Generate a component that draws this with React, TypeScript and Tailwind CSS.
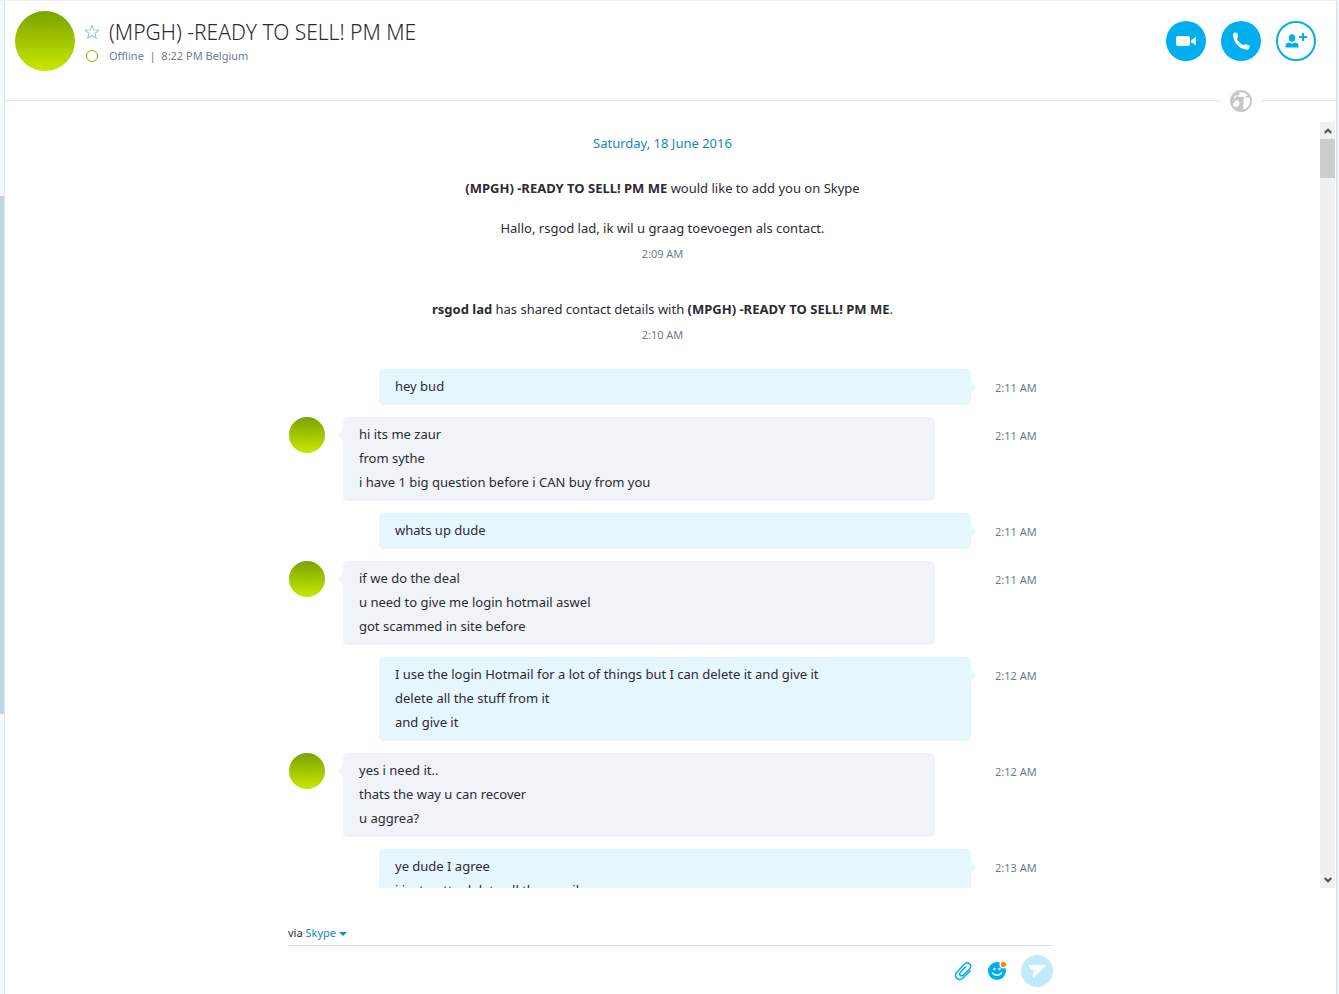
import React from "react";

type Message = { mine: boolean; time: string; lines: string[] };

const contact = "(MPGH) -READY TO SELL! PM ME";

const messages: Message[] = [
  { mine: true, time: "2:11 AM", lines: ["hey bud"] },
  { mine: false, time: "2:11 AM", lines: ["hi its me zaur", "from sythe", "i have 1 big question before i CAN buy from you"] },
  { mine: true, time: "2:11 AM", lines: ["whats up dude"] },
  { mine: false, time: "2:11 AM", lines: ["if we do the deal", "u need to give me login hotmail aswel", "got scammed in site before"] },
  {
    mine: true,
    time: "2:12 AM",
    lines: ["I use the login Hotmail for a lot of things but I can delete it and give it", "delete all the stuff from it", "and give it"],
  },
  { mine: false, time: "2:12 AM", lines: ["yes i need it..", "thats the way u can recover", "u aggrea?"] },
  { mine: true, time: "2:13 AM", lines: ["ye dude I agree", "i just gotta delete all the emails"] },
];

function Avatar({ size }: { size: string }) {
  return <div className={`${size} shrink-0 rounded-full bg-linear-to-b from-[#7ba300] to-[#c8e800]`} />;
}

function Bubble({ mine, lines }: { mine: boolean; lines: string[] }) {
  return (
    <div className={`relative w-[592px] rounded-[5px] px-4 pt-[5px] pb-[7px] ${mine ? "ml-9 bg-[#e5f6fd]" : "bg-[#f0f3f8]"}`}>
      <svg
        aria-hidden="true"
        viewBox="0 0 5 16"
        className={`absolute top-[10px] h-4 w-[5px] ${mine ? "left-full text-[#e5f6fd]" : "right-full -scale-x-100 text-[#f0f3f8]"}`}
      >
        <path d="M0 0C0 3 2 4.500 4 6.500Q5.500 8 4 9.500C2 11.500 0 13 0 16Z" fill="currentColor" />
      </svg>
      {lines.map((line) => (
        <p key={line} className="leading-6">
          {line}
        </p>
      ))}
    </div>
  );
}

function MessageRow({ message }: { message: Message }) {
  return (
    <li className="flex items-start">
      <div className="w-[54px] shrink-0">{!message.mine && <Avatar size="size-9" />}</div>
      <div className="w-[652px] shrink-0">
        <Bubble mine={message.mine} lines={message.lines} />
      </div>
      <time className="pt-[7px] text-[11px] leading-6 whitespace-nowrap text-[#6e7b91]">{message.time}</time>
    </li>
  );
}

function Header() {
  return (
    <header className="flex h-[99px] shrink-0 items-start justify-between pt-[10px] pr-5 pl-[10px]">
      <div className="flex">
        <Avatar size="size-[60px]" />
        <div className="ml-[9px] grid grid-cols-[16px_auto] items-center gap-x-[9px] self-start pt-[6px]">
          <button type="button" aria-label="Add to favourites">
            <svg viewBox="0 0 16 16" className="block size-4" fill="none" stroke="#9cc5d8" strokeWidth="1.1">
              <path d="M8 1.600 9.900 6 14.600 6.300 11 9.400 12.200 14 8 11.500 3.800 14 5 9.400 1.400 6.300 6.100 6Z" />
            </svg>
          </button>
          <h1 className="text-[21px] leading-[30px] font-light whitespace-nowrap text-[#2b2c33]">{contact}</h1>
          <span className="mx-auto size-3 rounded-full border border-[#7fba00]" />
          <p className="text-[11px] leading-[18px] whitespace-nowrap text-[#6e7b91]">Offline&nbsp; |&nbsp; 8:22 PM Belgium</p>
        </div>
      </div>
      <div className="flex gap-[15px] pt-[10px]">
        <button type="button" aria-label="Video call" className="flex size-10 items-center justify-center rounded-full bg-[#00aff0]">
          <svg viewBox="0 0 20 12" className="h-3 w-5" fill="#fff">
            <rect x="0" y="1" width="14" height="10" rx="2" />
            <path d="M15 5Q17.500 4 20 1.500V10.500Q17.500 8 15 7.500Z" />
          </svg>
        </button>
        <button type="button" aria-label="Call" className="flex size-10 items-center justify-center rounded-full bg-[#00aff0]">
          <svg viewBox="0 0 18 18" className="size-[18px]" fill="#fff">
            <path d="M1 3Q0.800 1 3 0.600 5 0.200 5.700 2L6 5Q6 5.600 4.800 6.600 6.300 10.500 11.300 13.200L12.800 12.300Q13.300 12 17.500 13.500 18 15.800 16.500 17.200 14.500 18.500 9.500 16.200 1.500 11.500 1 3Z" />
          </svg>
        </button>
        <button type="button" aria-label="Add people" className="flex size-10 items-center justify-center rounded-full border-2 border-[#00aff0]">
          <svg viewBox="0 0 22 16" className="h-4 w-[22px]" fill="#00aff0">
            <ellipse cx="7" cy="5" rx="3.200" ry="3.700" />
            <path d="M.5 14.500V12.500Q.5 10 4 9.500Q7 11.500 10 9.500Q13.500 10 13.500 12.500V14.500Z" />
            <path d="M17 0h2v3h3v2h-3v3h-2V5h-3V3h3Z" />
          </svg>
        </button>
      </div>
    </header>
  );
}

function Divider() {
  return (
    <div className="flex h-[22px] shrink-0 items-start">
      <div className="h-px flex-1 bg-[#d8e8f2]" />
      <div className="-mt-[10px] flex w-10 justify-center">
        <svg viewBox="0 0 22 22" className="size-[22px]" role="img" aria-label="Conversation language">
          <circle cx="11" cy="11" r="11" fill="#c6c7c9" />
          <path d="M9 2.300Q14 1.500 18 5.500L15 6.500 16 7.500H19.500Q20.500 11 19.500 14 17.500 18.500 13.500 19.500L13 16 14 12.500 13 10 14.500 7.500 12 6.500 8.500 7 7.500 5.500 10 4Z" fill="#fff" />
          <path d="M2.800 13.500Q4.500 12.500 5.500 10.500L8 10 9.500 13 9 15.500 6 17 3.800 16.500Z" fill="#fff" />
          <path d="M4.500 6 6.500 5 6.200 7.200 4 8.500Z" fill="#fff" />
        </svg>
      </div>
      <div className="h-px w-[75px] bg-[#d8e8f2]" />
    </div>
  );
}

function Scrollbar() {
  return (
    <div className="mr-px flex w-[15px] shrink-0 flex-col bg-[#f0f0f0]">
      <button type="button" aria-label="Scroll up" className="flex h-[17px] items-center justify-center">
        <svg viewBox="0 0 8 6" className="h-[6px] w-2" fill="none" stroke="#505050" strokeWidth="2">
          <path d="M.7 5 4 1.700 7.300 5" />
        </svg>
      </button>
      <div className="h-[39px] bg-[#cdcdcd]" />
      <button type="button" aria-label="Scroll down" className="mt-auto flex h-[17px] items-center justify-center">
        <svg viewBox="0 0 8 6" className="h-[6px] w-2" fill="none" stroke="#505050" strokeWidth="2">
          <path d="M.7 1 4 4.300 7.300 1" />
        </svg>
      </button>
    </div>
  );
}

function Composer() {
  return (
    <footer className="shrink-0 pt-[34px]">
      <form className="mx-auto max-w-[765px]">
        <div className="flex h-[24px] items-start border-b border-[#d3e2ed] text-[11px] leading-[22px] text-[#2b2c33]">
          <span>via&nbsp;</span>
          <button type="button" className="flex items-center gap-[3px] text-[#1487bd]">
            Skype
            <svg viewBox="0 0 8 4" className="mt-px h-1 w-2" fill="#0095cc">
              <path d="M0 0H8L4 4Z" />
            </svg>
          </button>
        </div>
        <div className="flex h-12 items-center pt-px">
          <textarea aria-label="Message" rows={1} className="h-8 flex-1 resize-none bg-transparent py-1 outline-none" />
          <button type="button" aria-label="Attach file" className="mr-[15px]">
            <svg viewBox="0 0 18 20" className="block h-5 w-[18px]" fill="none" stroke="#00aff0" strokeWidth="1.500" strokeLinecap="round">
              <path d="M16.300 9.800 9.300 16.800C4.800 21.200-1 15.800 2.600 11.600L10.300 3.200C13.500-.3 19 3.700 15.700 7.700L9.500 14C7.300 16.200 4.300 13.700 6.300 11.500L11.500 6" />
            </svg>
          </button>
          <button type="button" aria-label="Insert emoticon" className="mr-[14px]">
            <svg viewBox="0 0 20 20" className="block size-5">
              <circle cx="10" cy="10" r="9" fill="#00aff0" />
              <circle cx="7.500" cy="8" r="1.200" fill="#fff" />
              <circle cx="12.500" cy="8" r="1.200" fill="#fff" />
              <path d="M5.500 12Q10 16.500 14.500 12" fill="none" stroke="#fff" strokeWidth="1.500" strokeLinecap="round" />
              <circle cx="16.500" cy="3.500" r="4" fill="#fff" />
              <circle cx="16.500" cy="3.500" r="2.700" fill="#ff8c00" />
            </svg>
          </button>
          <button type="submit" aria-label="Send" className="flex size-8 items-center justify-center rounded-full bg-[#bfebfb]">
            <svg viewBox="0 0 18 14" className="h-[14px] w-[18px]" fill="#fff">
              <path d="M.5 2Q0 1 1 1H16.500Q18 1.200 17 2.400L6.500 12.800Q5 13.800 5 12V7.800L9.500 5.600 4.500 6.200Q3.500 6.200 3 5.500Z" />
            </svg>
          </button>
        </div>
      </form>
    </footer>
  );
}

export default function App() {
  return (
    <div className="flex h-screen overflow-hidden border-t border-[#f0f0f0] bg-white font-['Noto_Sans','Open_Sans',sans-serif] text-[13px] text-[#2b2c33]">
      <div className="flex w-[5px] shrink-0 flex-col border-r border-[#d8e5ee] bg-[#f7fafc]">
        <div className="mt-[195px] h-[518px] bg-[#bdd6e2]" />
      </div>
      <main className="flex min-w-0 flex-1 flex-col">
        <Header />
        <Divider />
        <section className="flex min-h-0 flex-1">
          <div className="min-w-0 flex-1 overflow-hidden">
            <div className="pt-[9px] text-center leading-6">
              <p className="text-[#1487bd]">Saturday, 18 June 2016</p>
              <p className="mt-[21px]">
                <strong>{contact}</strong> would like to add you on Skype
              </p>
              <p className="mt-4">Hallo, rsgod lad, ik wil u graag toevoegen als contact.</p>
              <p className="mt-[2px] text-[11px] leading-6 text-[#6e7b91]">2:09 AM</p>
              <p className="mt-[31px]">
                <strong>rsgod lad</strong> has shared contact details with <strong>{contact}</strong>.
              </p>
              <p className="mt-[2px] text-[11px] leading-6 text-[#6e7b91]">2:10 AM</p>
            </div>
            <ul className="mx-auto mt-[22px] flex max-w-[747px] flex-col gap-3">
              {messages.map((message, index) => (
                <MessageRow key={index} message={message} />
              ))}
            </ul>
          </div>
          <Scrollbar />
        </section>
        <Composer />
      </main>
      <div className="w-[3px] shrink-0 border-l border-[#cfe2f2] bg-[#eef5fc]" />
    </div>
  );
}
